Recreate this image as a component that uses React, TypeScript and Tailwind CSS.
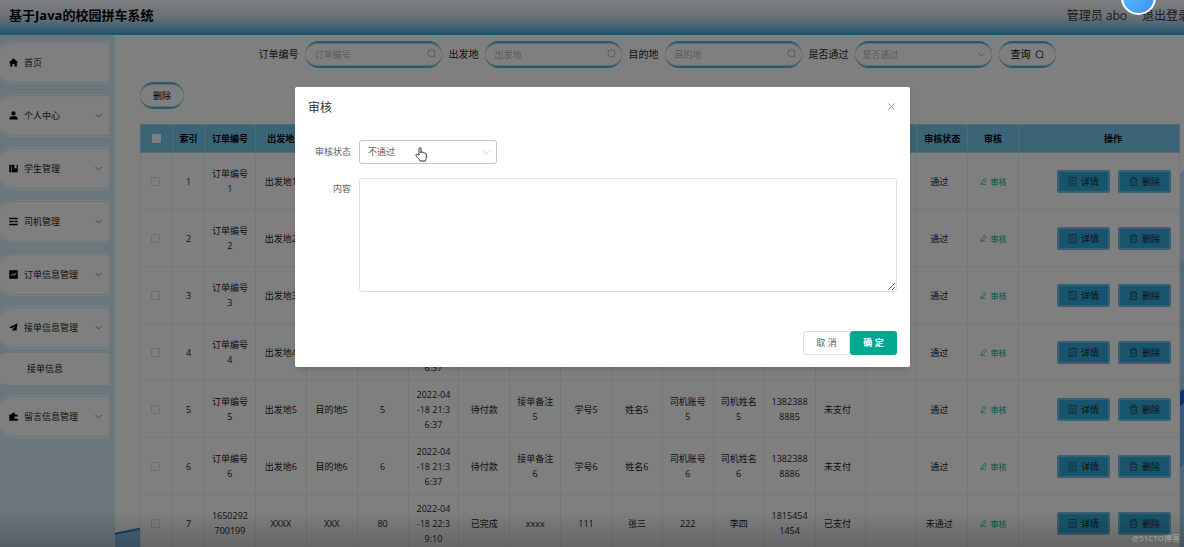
import { useState } from 'react';
import type { ReactNode } from 'react';
import { X } from 'lucide-react';

const icons: Record<string, ReactNode> = {
  home: <path d="M8 .5.500 7v1.500H2V15h4.200v-4.500h3.600V15H14V8.500h1.500V7z" />,
  user: <path d="M8 .5a3.800 3.800 0 1 1 0 7.600A3.800 3.800 0 1 1 8 .5zM.5 15c0-4 2-5.500 5-5.500h5c3 0 5 1.500 5 5.500z" />,
  book: <path d="M.5 1.500H4v13H.5zM5 1.500h4.500v7l2-1.600 2 1.600v-7h2v13H5z" />,
  list: <path d="M.5 1.500h15V4H.5zM.5 6.750h8v2.500h-8zM10 6.750h5.500v2.500H10zM.5 12h15v2.500H.5z" />,
  chart: <path fillRule="evenodd" d="M.5.500h15v15H.5zM3 11.500l3.500-3.500 2.200 2L13 6V4.200L8.700 8.200 6.500 6.200 3 9.700z" />,
  plane: <path d="M15.500.500.500 7.500l4 2.300L12.500 4 6.500 10.500v5l2.600-3.100 3.900 2z" />,
  wallet: <path fillRule="evenodd" d="M.5 5H2l7-4.500L11.500 5h4v3h-4.500a1.900 1.900 0 0 0 0 3.800h4.500V15.500H.5z" />,
};

const menus = [
  { icon: 'home', label: '首页' },
  { icon: 'user', label: '个人中心', arrow: true },
  { icon: 'book', label: '学生管理', arrow: true },
  { icon: 'list', label: '司机管理', arrow: true },
  { icon: 'chart', label: '订单信息管理', arrow: true },
  { icon: 'plane', label: '接单信息管理', arrow: true, child: '接单信息' },
  { icon: 'wallet', label: '留言信息管理', arrow: true },
];

const columns = ['索引', '订单编号', '出发地', '目的地', '价格', '接单时间', '订单状态', '接单备注', '学号', '姓名', '司机账号', '司机姓名', '手机号', '是否支付', '审核回复', '审核状态', '审核'];

const rows = [
  ...[1, 2, 3, 4, 5, 6].map((n) => [
    `${n}`, `订单编号\n${n}`, `出发地${n}`, `目的地${n}`, `${n}`, '2022-04\n-18 21:3\n6:37', '待付款', `接单备注\n${n}`,
    `学号${n}`, `姓名${n}`, `司机账号\n${n}`, `司机姓名\n${n}`, `1382388\n888${n}`, '未支付', '', '通过',
  ]),
  ['7', '1650292\n700199', 'XXXX', 'XXX', '80', '2022-04\n-18 22:3\n9:10', '已完成', 'xxxx', '111', '张三', '222', '李四', '1815454\n1454', '已支付', '', '未通过'],
];

const pill =
  'h-[27px] rounded-full border-y-2 border-[#55b2de] bg-white shadow-[inset_0_1px_0_#b4dcee,inset_0_-1px_0_#b4dcee]';

function SearchIcon({ className }: { className: string }) {
  return (
    <svg viewBox="0 0 20 20" className={`size-[9px] fill-none stroke-current stroke-2 ${className}`}>
      <circle cx="10" cy="9.500" r="8" />
      <path d="m16 15.500 2.500 3" />
    </svg>
  );
}

function Arrow({ className }: { className: string }) {
  return (
    <svg viewBox="0 0 16 16" className={`size-[7px] fill-none stroke-current stroke-2 ${className}`}>
      <path d="m1 4.500 7 7 7-7" />
    </svg>
  );
}

function SearchField({ id, label }: { id: string; label: string }) {
  return (
    <div className="flex items-center">
      <label htmlFor={id} className="mr-1.5 text-[10px] text-[#222]">{label}</label>
      <div className="relative">
        <input id={id} placeholder={label} className={`${pill} block w-[137px] px-2.5 text-[9px] placeholder:text-[#b4b6ba]`} />
        <SearchIcon className="absolute right-1.5 top-2 text-[#a8abb2]" />
      </div>
    </div>
  );
}

function RowButton({ kind }: { kind: 'detail' | 'remove' }) {
  return (
    <button className="flex h-[23px] w-[53px] items-center justify-center gap-1 rounded-[2px] border-2 border-[#74bfe0] bg-[#30a8dc] text-[9px]">
      <svg viewBox="0 0 16 16" className="size-[9px] fill-none stroke-[#222]">
        {kind === 'detail' ? (
          <path d="M2 1h12v14H2zM5 5h3M5 8h3M5 11h6M10 5v3" />
        ) : (
          <path d="M1 4h14M5 4V1h6v3M3 4v11h10V4M6 7v5M10 7v5" />
        )}
      </svg>
      {kind === 'detail' ? '详情' : '删除'}
    </button>
  );
}

function Sidebar() {
  return (
    <nav className="flex w-[115px] shrink-0 flex-col gap-2.5 overflow-hidden bg-[#d4edf8] pr-1.5 pt-1.5">
      {menus.map((m) => (
        <div key={m.label}>
          <a
            href="#"
            className="-ml-1.5 flex h-[43px] items-center rounded-l-[20px] border-y-[3px] border-l-[3px] border-double border-[#f4fcff] bg-white bg-clip-padding pl-3 text-[9px] text-[#222]"
          >
            <svg viewBox="0 0 16 16" className="mr-1.5 size-[9px] fill-black">{icons[m.icon]}</svg>
            {m.label}
            {m.arrow && <Arrow className="ml-auto mr-[7px] text-[#777]" />}
          </a>
          {m.child && (
            <a href="#" className="-ml-1.5 mt-1 flex h-8 items-center rounded-l-[14px] bg-white pl-[33px] text-[9px] text-[#222]">
              {m.child}
            </a>
          )}
        </div>
      ))}
    </nav>
  );
}

function OrderTable() {
  return (
    <table className="w-full table-fixed border-collapse bg-white text-center text-[9px] leading-[15px] text-[#222]">
      <colgroup>
        <col className="w-8" />
        <col className="w-8" />
        {columns.slice(1).map((c) => (
          <col key={c} />
        ))}
        <col className="w-[161px]" />
      </colgroup>
      <thead>
        <tr className="h-7 bg-[#78c8ee] text-black">
          <th className="border border-[#a6d8ee]">
            <input type="checkbox" aria-label="全选" className="mx-auto block size-[9px] appearance-none rounded-[1px] bg-white" />
          </th>
          {columns.map((c) => (
            <th key={c} className="whitespace-nowrap border border-[#a6d8ee] font-bold">{c}</th>
          ))}
          <th className="border border-[#a6d8ee] pl-7 font-bold">操作</th>
        </tr>
      </thead>
      <tbody>
        {rows.map((row) => (
          <tr key={row[0]} className="h-[57px]">
            <td className="border border-[#ebeef5] pr-0.5">
              <input type="checkbox" aria-label={row[0]} className="mx-auto block size-[9px] appearance-none rounded-[1px] border border-[#dcdfe6] bg-white" />
            </td>
            {row.map((cell, i) => (
              <td key={i} className={`whitespace-pre border border-[#ebeef5] ${i > 12 ? 'pr-1.5' : ''}`}>{cell}</td>
            ))}
            <td className="border border-[#ebeef5]">
              <button className="inline-flex items-center gap-1 text-[8px] text-[#00a884]">
                <svg viewBox="0 0 16 16" className="size-[7px] fill-none stroke-current stroke-[1.5]"><path d="M3 10 10 1l4 3-7 9-4 1zM1 15.500h13" /></svg>
                审核
              </button>
            </td>
            <td className="border border-[#ebeef5] pr-2">
              <div className="flex justify-end gap-2">
                <RowButton kind="detail" />
                <RowButton kind="remove" />
              </div>
            </td>
          </tr>
        ))}
      </tbody>
    </table>
  );
}

function AuditDialog({ onClose }: { onClose: () => void }) {
  return (
    <div role="dialog" aria-label="审核" className="relative mx-auto mt-[87px] w-full max-w-[615px] rounded-[2px] bg-white px-[13px] pb-3 pt-[13px] text-[9px] text-[#606266] shadow-md">
      <div className="flex h-4 items-center justify-between">
        <h2 className="text-[12px] text-[#303133]">审核</h2>
        <button aria-label="关闭" onClick={onClose} className="mb-1"><X className="size-[11px] text-[#909399]" strokeWidth={2} /></button>
      </div>
      <div className="mt-6 flex items-center">
        <label htmlFor="status" className="w-[51px] pr-2 text-right">审核状态</label>
        <div className="relative">
          <select id="status" defaultValue="不通过" className="block h-6 w-[138px] appearance-none rounded-[3px] border border-[#c0c8cc] bg-white px-2">
            <option>不通过</option>
            <option>通过</option>
          </select>
          <Arrow className="pointer-events-none absolute right-[7px] top-[9px] text-[#c0c4cc]" />
        </div>
      </div>
      <div className="mt-3.5 flex">
        <label htmlFor="content" className="w-[51px] pr-2 pt-1 text-right">内容</label>
        <textarea id="content" className="h-[114px] flex-1 rounded-[3px] border border-[#dcdfe6]" />
      </div>
      <div className="mt-[39px] flex justify-end">
        <button onClick={onClose} className="h-6 w-[47px] rounded-[3px] border border-[#dcdfe6]">取 消</button>
        <button onClick={onClose} className="h-6 w-[47px] rounded-[3px] bg-[#00a88f] font-bold text-white">确 定</button>
      </div>
      {/* hand pointer */}
      <svg viewBox="0 0 12 15" className="absolute left-[120px] top-[60px] h-[15px] w-3 fill-white stroke-[#333]">
        <path d="M4 8V1.700a1 1 0 0 1 2 0V6l.3-.8a.9.900 0 0 1 1.700.3l.2.400a.9.900 0 0 1 1.600.4l.2.300a.8.800 0 0 1 1.400.6V10c0 2-1 2.500-1 4H5c0-1.500-2.500-3-4-5.300C.3 7.500 1.600 6.800 2.400 7.500z" />
      </svg>
    </div>
  );
}

export default function App() {
  const [open, setOpen] = useState(true);

  return (
    <div className="relative flex h-screen flex-col overflow-hidden bg-white font-['Open_Sans','Noto_Sans_CJK_SC',sans-serif]">
      <header className="flex h-[35px] shrink-0 items-center justify-between bg-linear-to-b from-[#fafcff] via-[#dce6ec] via-45% to-[#34a8e4] pb-1 pl-[9px]">
        <h1 className="text-[13px] font-bold text-black">基于Java的校园拼车系统</h1>
        <div className="-mr-1.5 flex gap-[15px] whitespace-nowrap text-[12px] text-[#333]">
          <span>管理员 abo</span>
          <a href="#">退出登录</a>
        </div>
      </header>

      <div className="flex flex-1">
        <Sidebar />
        <main className="relative min-w-0 flex-1 pl-[25px] pr-1 pt-1.5">
          {/* blue wave behind the table */}
          <svg viewBox="0 0 1069 512" preserveAspectRatio="none" className="absolute inset-0 size-full">
            <path d="M0 494 30 488V512H0z" fill="#8fc8f5" />
            <path d="M0 494 30 488" stroke="#2080e8" strokeWidth="2" />
            <path d="M1063 140 1069 133V225H1063z" fill="#c4e2f6" />
            <path d="M1063 225H1069V355H1063z" fill="#a8d2f2" />
            <path d="M1063 354 1069 351V365L1063 370z" fill="#2068d0" />
            <path d="M1063 370 1069 365V425L1063 432z" fill="#70aeee" />
            <path d="M1063 432 1069 425V512H1063z" fill="#a4cdf0" />
          </svg>
          <div className="relative">
            <form className="flex items-center justify-center gap-[7px] pr-1.5" onSubmit={(e) => e.preventDefault()}>
              <SearchField id="orderNo" label="订单编号" />
              <SearchField id="from" label="出发地" />
              <SearchField id="to" label="目的地" />
              <div className="relative flex items-center">
                <label htmlFor="passed" className="mr-1.5 text-[10px] text-[#222]">是否通过</label>
                <select id="passed" className={`${pill} w-[137px] appearance-none px-2 text-[9px] text-[#b4b6ba]`}>
                  <option>是否通过</option>
                </select>
                <Arrow className="pointer-events-none absolute right-[7px] top-2.5 text-[#a8abb2]" />
              </div>
              <button className={`${pill} flex w-[57px] items-center justify-center gap-1 text-[10px]`}>
                查询
                <SearchIcon className="text-[#222]" />
              </button>
            </form>
            <button className={`${pill} mb-[15px] mt-3.5 block w-11 text-[9px]`}>删除</button>
            <OrderTable />
          </div>
        </main>
      </div>

      {open && (
        <div className="absolute inset-0 bg-black/50 pl-[21px]">
          <AuditDialog onClose={() => setOpen(false)} />
        </div>
      )}

      <div className="pointer-events-none absolute inset-x-0 bottom-0 h-9 bg-linear-to-b from-transparent to-black/20" />
      <div className="absolute -top-5 right-7 size-[35px] rounded-full border-2 border-white bg-linear-to-br from-[#5cc4ff] to-[#3f90f0]" />
      <span className="absolute bottom-[3px] right-1 text-[8px] text-white/40">@51CTO博客</span>
    </div>
  );
}
